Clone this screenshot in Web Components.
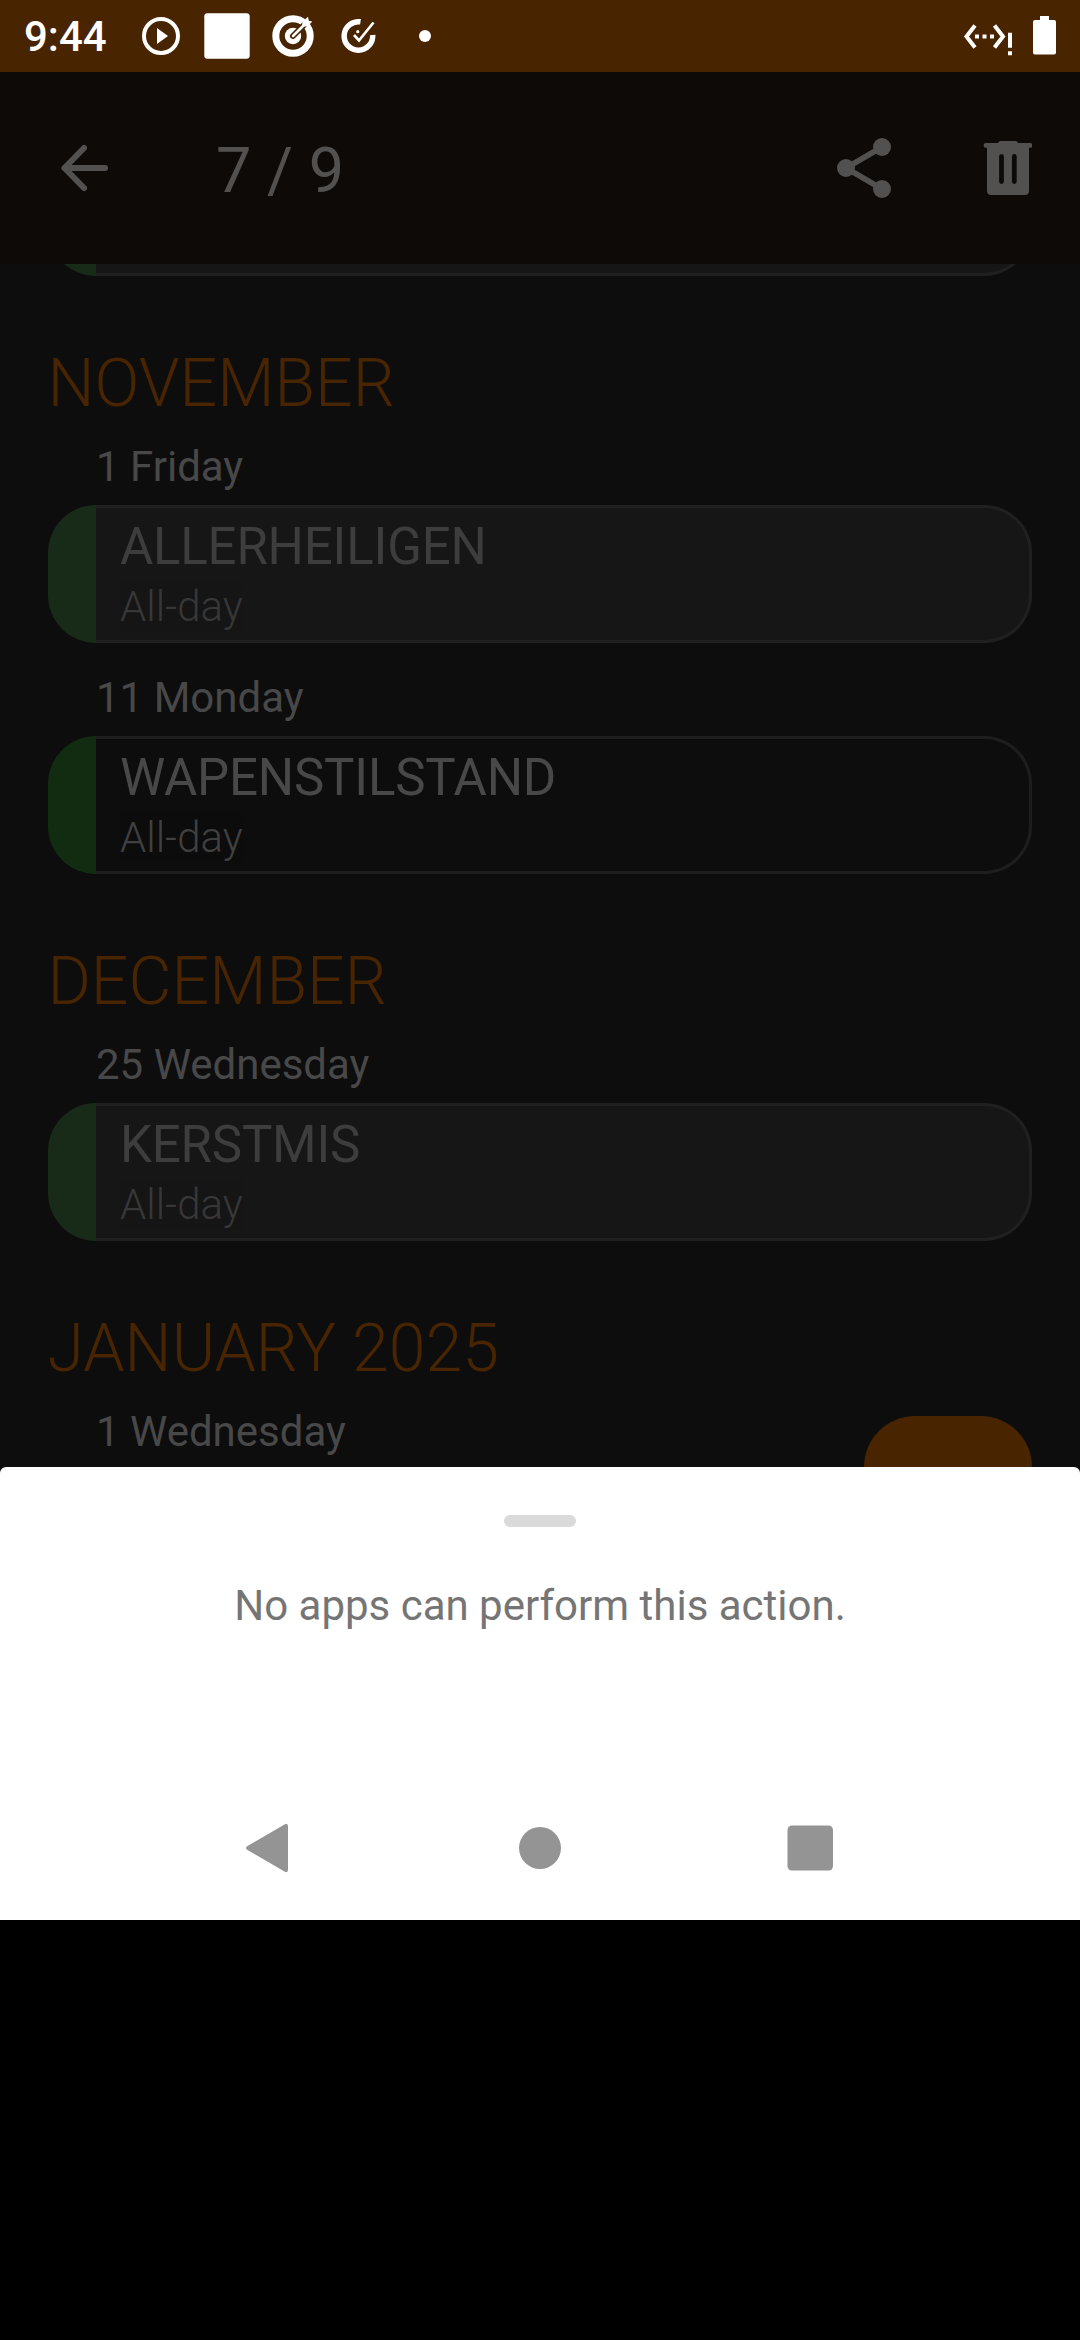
<!DOCTYPE html>
<html lang="en">
<head>
<meta charset="utf-8">
<title>Agenda</title>
<style>
html,body{margin:0;padding:0;background:#000}
body{width:1080px;height:2340px;overflow:hidden;font-family:Roboto,"Liberation Sans",sans-serif}
</style>
</head>
<body>
<agenda-app></agenda-app>
<script>
const define = (name, html) => {
  const t = document.createElement('template');
  t.innerHTML = html;
  customElements.define(name, class extends HTMLElement {
    constructor() {
      super();
      this.attachShadow({ mode: 'open' }).appendChild(t.content.cloneNode(true));
    }
  });
};

define('status-bar', `
<style>
:host{display:flex;height:72px;background:#482400;color:#fff;align-items:center;justify-content:space-between;box-sizing:border-box;padding:0 24px}
.left,.right{display:flex;align-items:center}
.time{font-size:42px;font-weight:500;line-height:50px;width:82px;margin-right:35px;white-space:nowrap;padding-top:1px}
svg{display:block;fill:#fff}
.left svg{width:50px;height:50px;margin-right:16px}
.left svg:last-child{margin:0}
</style>
<div class="left">
  <span class="time">9:44</span>
  <svg viewBox="136 11 50 50" style="margin-left:-5px"><circle cx="161" cy="36" r="17" fill="none" stroke="#fff" stroke-width="4"/><path d="M157 28v16l11-8z"/></svg>
  <svg viewBox="202 11 50 50"><rect x="204.300" y="13.300" width="45.400" height="45.400" rx="3"/></svg>
  <svg viewBox="268 11 50 50">
    <circle cx="293" cy="36" r="17.200" fill="none" stroke="#fff" stroke-width="7"/>
    <circle cx="293" cy="36" r="8.200"/>
    <path d="M293 36L309 20" stroke="#482400" stroke-width="6" stroke-linecap="round"/>
    <path d="M293 36L305 24" stroke="#fff" stroke-width="2.600" stroke-linecap="round"/>
    <path d="M302 26.500l.5-4.800 5.500-5 .8 4 3.500.8-4.800 5z"/>
  </svg>
  <svg viewBox="334 11 50 50">
    <path d="M360.500 21.800A14.300 14.300 0 1 0 372.700 35" fill="none" stroke="#fff" stroke-width="5.500"/>
    <path d="M354 35l5 5.500L373.500 22.500" fill="none" stroke="#fff" stroke-width="2.700"/>
    <circle cx="357.800" cy="31.700" r="1.600"/>
  </svg>
  <svg viewBox="400 11 50 50"><circle cx="425" cy="36" r="6"/></svg>
</div>
<div class="right">
  <svg width="96" height="48" viewBox="960 12 96 48">
    <path d="M975 25.500L966.500 36.500 975 47.500M994.500 25.500L1003 36.500 994.500 47.500" fill="none" stroke="#fff" stroke-width="4"/>
    <path d="M975 34.500h4v4h-4zM982.500 34.500h4v4h-4zM990 34.500h4v4h-4zM1008 32.700h4v15h-4zM1008 51.200h4v4h-4z"/>
    <path d="M1040 16h9v4h5a2 2 0 0 1 2 2v30.500a2 2 0 0 1-2 2h-19a2 2 0 0 1-2-2V22a2 2 0 0 1 2-2h5z"/>
  </svg>
</div>`);

define('app-bar', `
<style>
:host{display:flex;height:192px;background:#0e0a08;color:#535150;align-items:center;box-sizing:border-box;padding:0 48px}
svg{display:block;fill:currentColor;flex:none}
h1{margin:0 0 0 96px;font-size:63px;font-weight:400;line-height:74px;flex:1;padding-top:5px}
.share{margin-right:72px}
</style>
<svg width="72" height="72" viewBox="48 132 72 72"><path d="M105 168H64.500M84 148L64.500 168 84 188" fill="none" stroke="currentColor" stroke-width="6" stroke-linecap="round" stroke-linejoin="round"/></svg>
<h1><slot></slot></h1>
<svg class="share" width="72" height="72" viewBox="828 132 72 72"><circle cx="846" cy="168" r="9"/><circle cx="882" cy="147" r="9"/><circle cx="882" cy="189" r="9"/><path d="M882 147L846 168 882 189" fill="none" stroke="currentColor" stroke-width="5.500"/></svg>
<svg width="60" height="72" viewBox="972 132 60 72"><path fill-rule="evenodd" d="M986 143h12q.5-2 2.500-2h15q2 0 2.500 2h12a2.200 2.200 0 0 1 0 4.800h-1V190.500q0 4.500-4.500 4.500h-33q-4.500 0-4.500-4.500V147.800h-1a2.200 2.200 0 0 1 0-4.800zM1001.500 154a2.400 2.400 0 0 0-2.400 2.400v25.200a2.400 2.400 0 0 0 4.800 0v-25.200a2.400 2.400 0 0 0-2.400-2.400zM1014.300 154a2.400 2.400 0 0 0-2.400 2.400v25.200a2.400 2.400 0 0 0 4.800 0v-25.200a2.400 2.400 0 0 0-2.400-2.400z"/></svg>`);

define('month-heading', `
<style>:host{display:block;margin:68px 0 -11px 47.500px;height:79px;line-height:79px;font-size:66.200px;font-weight:300;color:#482400;white-space:nowrap}</style><slot></slot>`);

define('day-label', `
<style>:host{display:block;margin:30px 0 13px 96px;height:50px;line-height:50px;font-size:42px;color:#484848;white-space:nowrap}</style><slot></slot>`);

define('event-card', `
<style>
:host{display:flex;flex:none;height:138px;margin:0 48px;border-radius:48px;overflow:hidden;background:linear-gradient(90deg,var(--mark,#122c12) 48px,var(--line,#1e1e1e) 48px);padding:3px;box-sizing:border-box;--fill:#0d0d0d;color:#484848}
:host([dim]){--mark:#182a18;--line:#202020;--fill:#161616;color:#3d3d3d}
.body{flex:1;margin-left:45px;background:var(--fill);border-radius:0 45px 45px 0;padding:9px 24px 0;display:flex;flex-direction:column;gap:5px}
.title{font-size:51px;letter-spacing:-.2px;line-height:60px;height:60px;white-space:nowrap}
.time{font-size:42px;line-height:50px;font-weight:300;height:50px;opacity:.88}
</style>
<div class="body"><div class="title"><slot></slot></div><div class="time"><slot name="time"></slot></div></div>`);

define('agenda-list', `
<style>
:host{display:block;height:1203px;overflow:hidden;background:#0d0d0d;position:relative}
.items{display:flex;flex-direction:column;margin-top:-126px}
.fab{position:absolute;left:864px;top:1152px;width:168px;height:168px;border-radius:51px;background:#482400}
</style>
<div class="items"><slot></slot></div><div class="fab"></div>`);

define('bottom-sheet', `
<style>
:host{display:block;background:#0d0d0d}
.sheet{display:flex;flex-direction:column;align-items:center;background:#fff;border-radius:6px 6px 0 0;height:309px;padding-top:48px;box-sizing:border-box}
.handle{width:72px;height:12px;border-radius:6px;background:#dadada}
p{margin:54px 0 0;font-size:42px;line-height:50px;color:#757575;white-space:nowrap}
</style>
<div class="sheet"><div class="handle"></div><p><slot></slot></p></div>`);

define('nav-bar', `
<style>
:host{display:flex;height:144px;background:#fff;align-items:center;justify-content:center;gap:198px}
svg{display:block;width:72px;height:72px;fill:#949494}
</style>
<svg viewBox="234 1812 72 72"><path d="M284.500 1824.500Q288 1822.500 288 1826.500V1869.500Q288 1873.500 284.500 1871.500L247.500 1850Q244.500 1848 247.500 1846z"/></svg>
<svg viewBox="504 1812 72 72"><circle cx="540" cy="1848" r="21"/></svg>
<svg viewBox="774 1812 72 72"><rect x="787.500" y="1825.500" width="45.500" height="45" rx="4.500"/></svg>`);

define('agenda-app', `
<style>:host{display:flex;flex-direction:column;width:1080px;height:2340px;background:#000}
status-bar,app-bar,agenda-list,bottom-sheet,nav-bar{flex:none}</style>
<status-bar></status-bar>
<app-bar>7 / 9</app-bar>
<agenda-list>
  <event-card dim></event-card>
  <month-heading>NOVEMBER</month-heading>
  <day-label>1 Friday</day-label>
  <event-card dim>ALLERHEILIGEN<span slot="time">All-day</span></event-card>
  <day-label>11 Monday</day-label>
  <event-card>WAPENSTILSTAND<span slot="time">All-day</span></event-card>
  <month-heading>DECEMBER</month-heading>
  <day-label>25 Wednesday</day-label>
  <event-card dim>KERSTMIS<span slot="time">All-day</span></event-card>
  <month-heading>JANUARY 2025</month-heading>
  <day-label>1 Wednesday</day-label>
</agenda-list>
<bottom-sheet>No apps can perform this action.</bottom-sheet>
<nav-bar></nav-bar>`);
</script>
</body>
</html>
